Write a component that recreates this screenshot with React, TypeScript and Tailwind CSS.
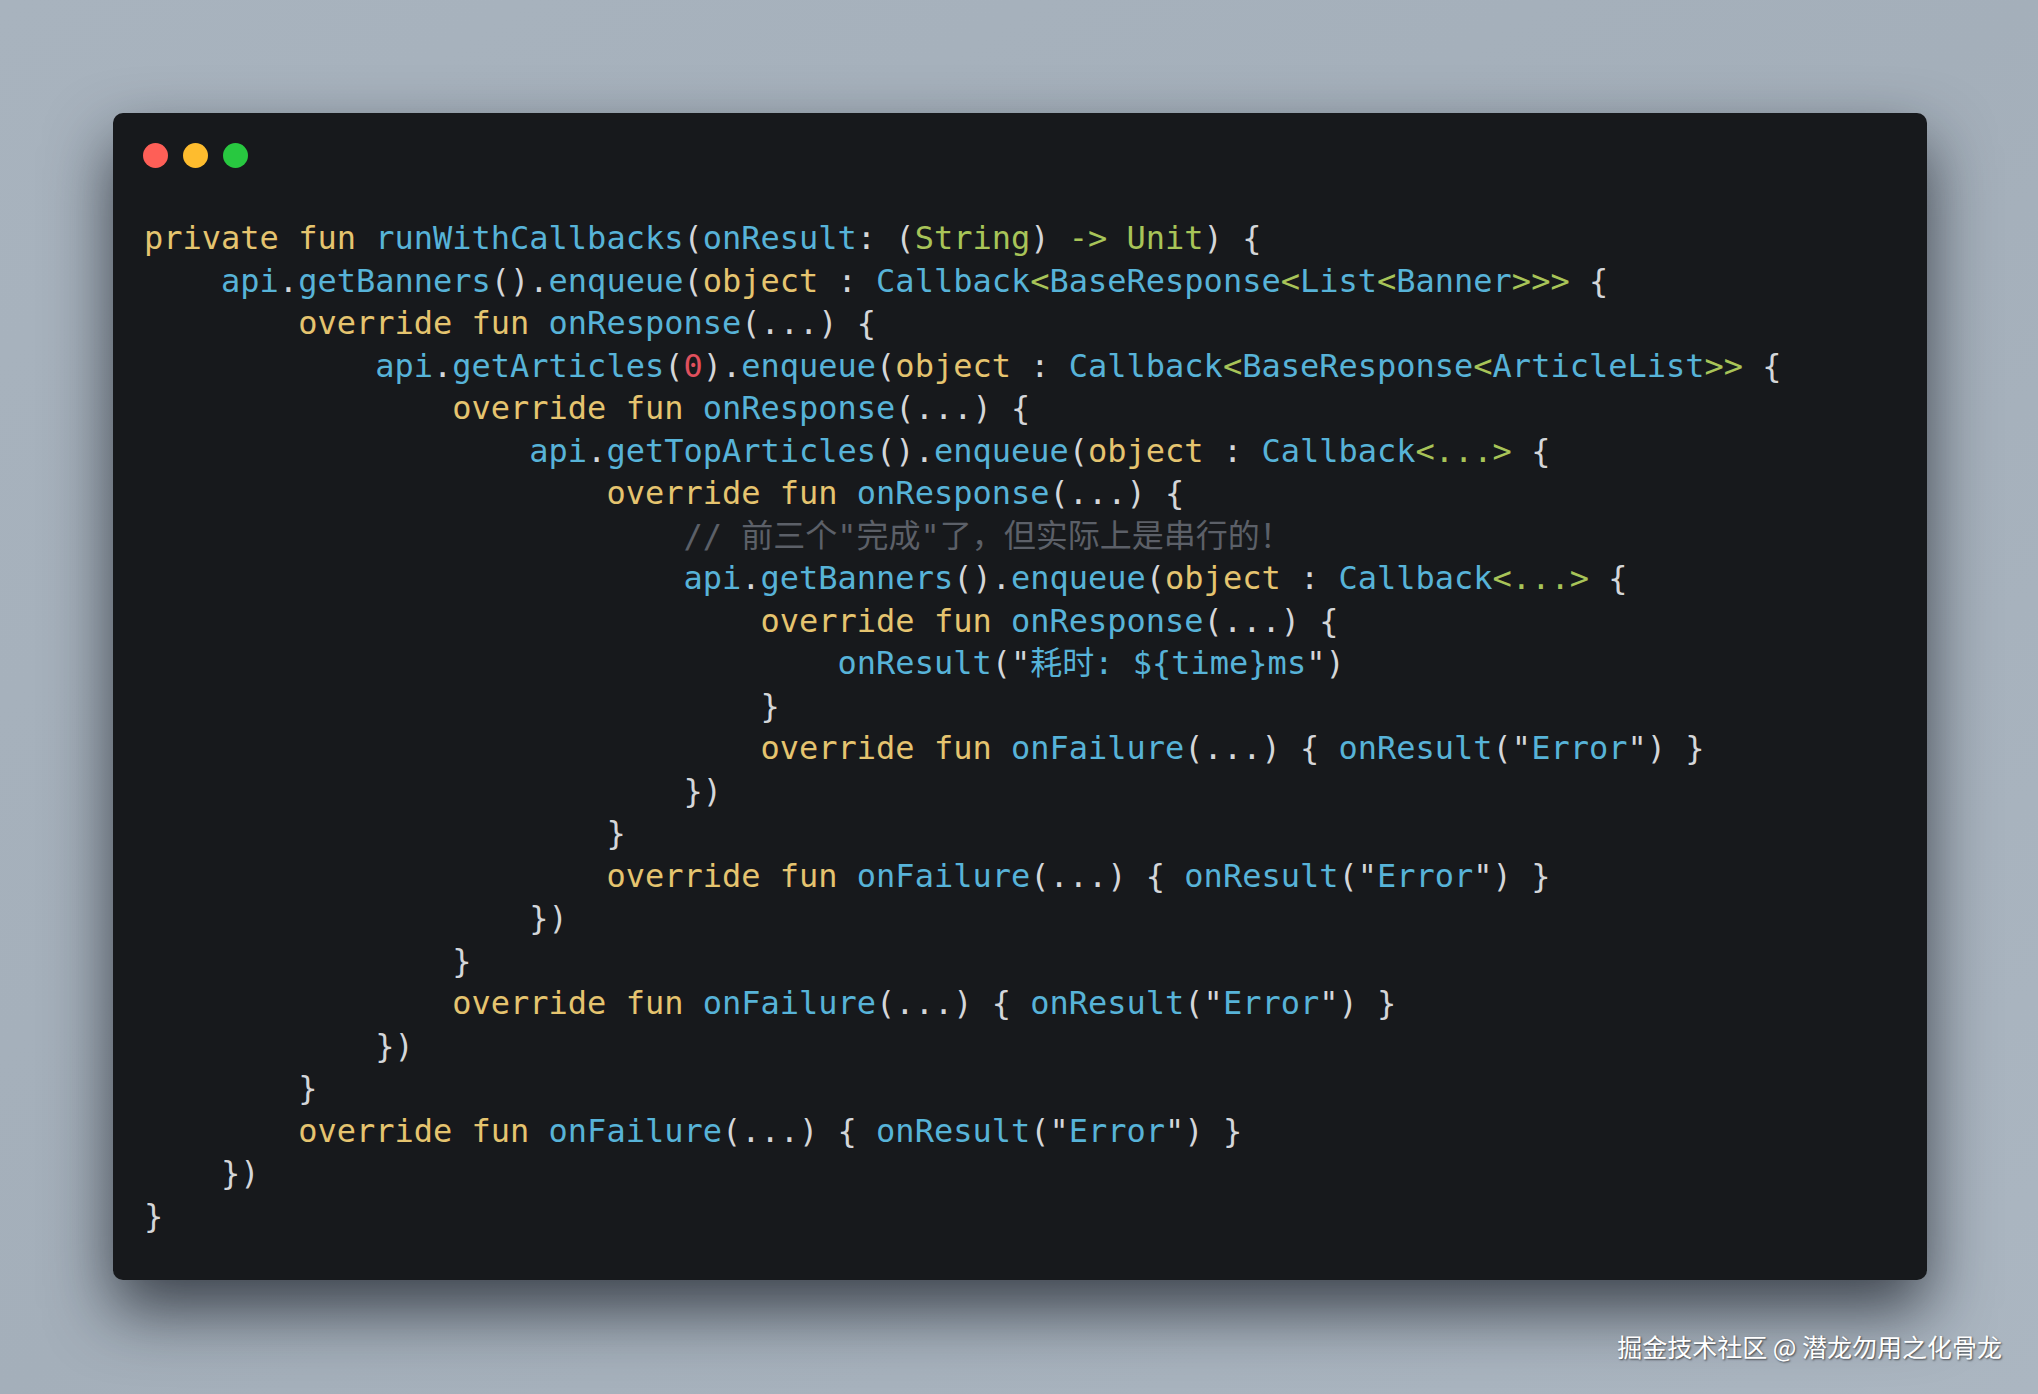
type Seg = [string, string];

const Y = "text-[#e5c46f]";
const B = "text-[#57b3d8]";
const G = "text-[#a8c458]";
const W = "text-[#d4d6d9]";
const C = "text-[#5c6068]";
const R = "text-[#e0505d]";

const ind = (n: number): Seg => [W, " ".repeat(n)];

const onResponse = (n: number): Seg[] => [
  ind(n),
  [Y, "override fun "],
  [B, "onResponse"],
  [W, "(...) {"],
];

const onFailure = (n: number): Seg[] => [
  ind(n),
  [Y, "override fun "],
  [B, "onFailure"],
  [W, "(...) { "],
  [B, "onResult"],
  [W, '("'],
  [B, "Error"],
  [W, '") }'],
];

const getBanners = (n: number, generic: Seg[]): Seg[] => [
  ind(n),
  [B, "api"],
  [W, "."],
  [B, "getBanners"],
  [W, "()."],
  [B, "enqueue"],
  [W, "("],
  [Y, "object"],
  [W, " : "],
  [B, "Callback"],
  ...generic,
  [W, " {"],
];

const lines: Seg[][] = [
  [
    [Y, "private fun "],
    [B, "runWithCallbacks"],
    [W, "("],
    [B, "onResult"],
    [W, ": ("],
    [G, "String"],
    [W, ") "],
    [G, "->"],
    [W, " "],
    [G, "Unit"],
    [W, ") {"],
  ],
  getBanners(4, [
    [G, "<"],
    [B, "BaseResponse"],
    [G, "<"],
    [B, "List"],
    [G, "<"],
    [B, "Banner"],
    [G, ">>>"],
  ]),
  onResponse(8),
  [
    ind(12),
    [B, "api"],
    [W, "."],
    [B, "getArticles"],
    [W, "("],
    [R, "0"],
    [W, ")."],
    [B, "enqueue"],
    [W, "("],
    [Y, "object"],
    [W, " : "],
    [B, "Callback"],
    [G, "<"],
    [B, "BaseResponse"],
    [G, "<"],
    [B, "ArticleList"],
    [G, ">>"],
    [W, " {"],
  ],
  onResponse(16),
  [
    ind(20),
    [B, "api"],
    [W, "."],
    [B, "getTopArticles"],
    [W, "()."],
    [B, "enqueue"],
    [W, "("],
    [Y, "object"],
    [W, " : "],
    [B, "Callback"],
    [G, "<...>"],
    [W, " {"],
  ],
  onResponse(24),
  [ind(28), [C, "// 前三个\"完成\"了，但实际上是串行的！"]],
  getBanners(28, [[G, "<...>"]]),
  onResponse(32),
  [
    ind(36),
    [B, "onResult"],
    [W, '("'],
    [B, "耗时: ${time}ms"],
    [W, '")'],
  ],
  [ind(32), [W, "}"]],
  onFailure(32),
  [ind(28), [W, "})"]],
  [ind(24), [W, "}"]],
  onFailure(24),
  [ind(20), [W, "})"]],
  [ind(16), [W, "}"]],
  onFailure(16),
  [ind(12), [W, "})"]],
  [ind(8), [W, "}"]],
  onFailure(8),
  [ind(4), [W, "})"]],
  [[W, "}"]],
];

export default function App() {
  return (
    <div className="h-screen w-full overflow-hidden bg-gradient-to-br from-[#a8b3be] via-[#a4afba] to-[#abb6c1] pt-[113px]">
      {/* Code window */}
      <div className="ml-[113px] h-[1167px] w-[1814px] rounded-[10px] bg-[#17191c] px-[30px] pt-[30px] shadow-[0_30px_65px_rgba(15,20,28,0.7)]">
        <div className="flex gap-[15px]">
          <span className="h-[25px] w-[25px] rounded-full bg-[#fe5f57]" />
          <span className="h-[25px] w-[25px] rounded-full bg-[#febc2e]" />
          <span className="h-[25px] w-[25px] rounded-full bg-[#28c840]" />
        </div>

        <div
          className="mt-[49px] pl-[1px] text-[32px] leading-[42.5px]"
          style={{ fontFamily: '"DejaVu Sans Mono", "Noto Sans CJK SC", monospace' }}
        >
          {lines.map((line, i) => (
            <div key={i} className="whitespace-pre">
              {line.map(([cls, text], j) => (
                <span key={j} className={cls}>
                  {text}
                </span>
              ))}
            </div>
          ))}
        </div>
      </div>

      {/* Watermark */}
      <div className="mt-[48px] flex justify-end pr-[36px]">
        <span
          className="text-[25px] text-white [text-shadow:1px_1px_2px_rgba(0,0,0,0.6)]"
          style={{ fontFamily: '"Noto Sans CJK SC", sans-serif' }}
        >
          掘金技术社区 @ 潜龙勿用之化骨龙
        </span>
      </div>
    </div>
  );
}
